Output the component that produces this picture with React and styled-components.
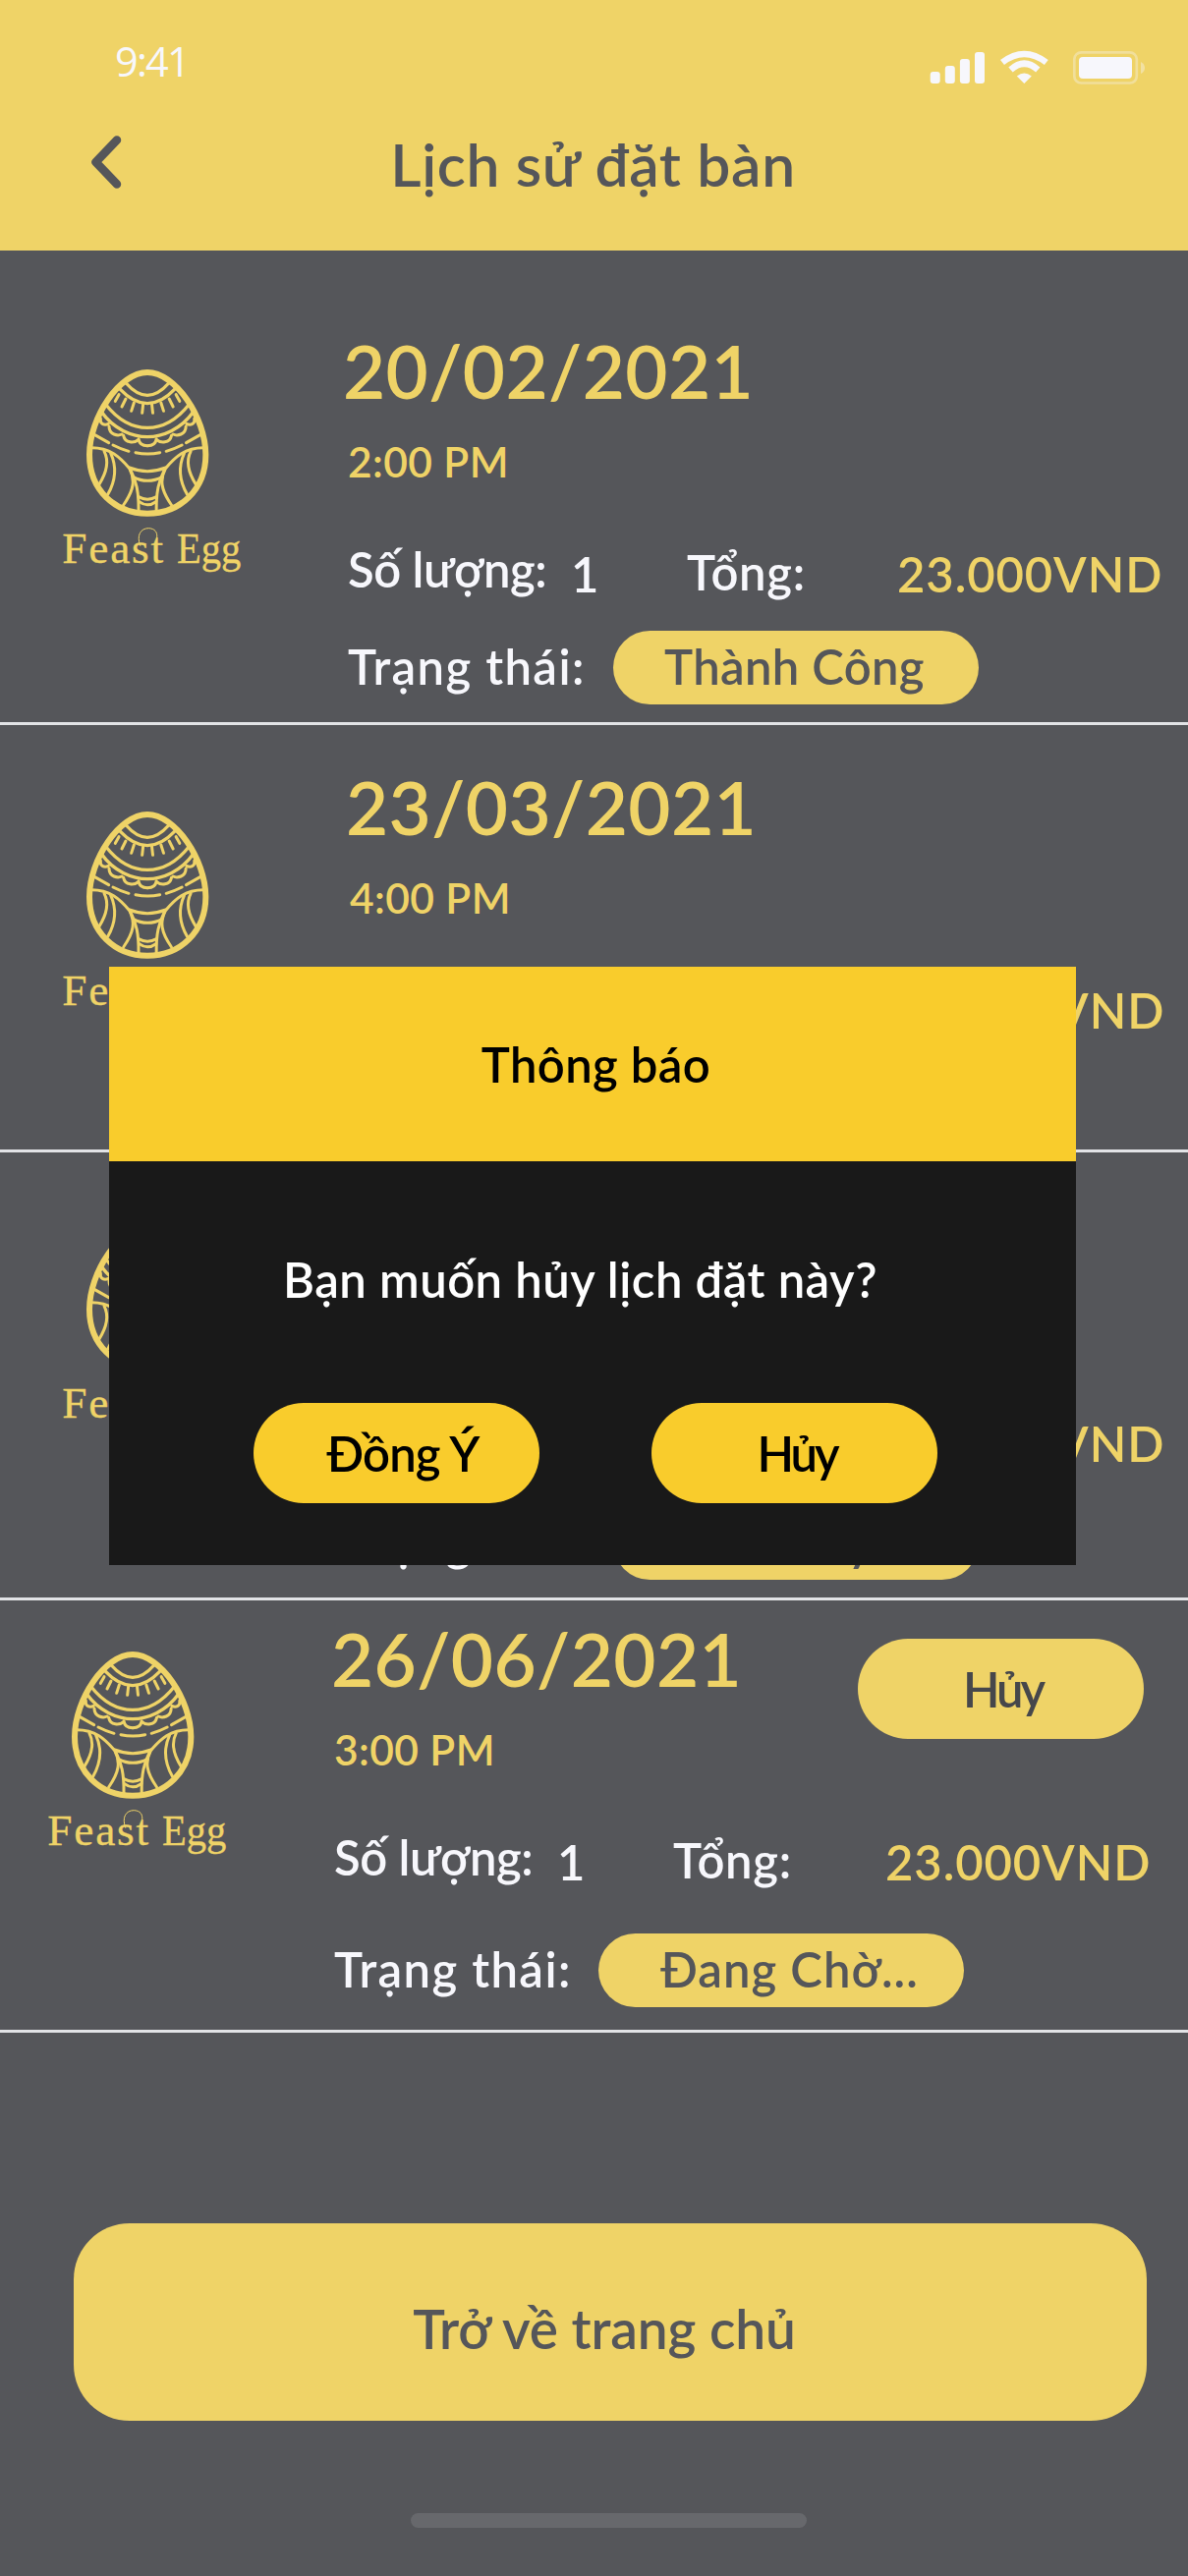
import React from "react";
import styled, { createGlobalStyle } from "styled-components";

const color = {
  page: "#55565a",
  sand: "#efd367",
  amber: "#f9cc2c",
  ink: "#191919",
  light: "#f7f7fc",
  line: "#e2e3e6",
};

const Global = createGlobalStyle`
  *, *::before, *::after { box-sizing: border-box; }
  body { margin: 0; background: ${color.page}; }
  button { border: 0; margin: 0; font: inherit; color: inherit; cursor: pointer; }
  h1, h2, p { margin: 0; font: inherit; }
`;

const Screen = styled.div`
  position: relative;
  width: 1209px;
  height: 2622px;
  overflow: hidden;
  background: ${color.page};
  color: ${color.light};
  font: 600 49px/60px Lato, "Noto Sans", sans-serif;
  white-space: nowrap;
`;

const Header = styled.header`
  height: 255px;
  background: ${color.sand};
  color: ${color.page};
`;

const StatusBar = styled.div`
  display: flex;
  align-items: flex-start;
  height: 128px;
  padding: 34px 44px 0 117px;
`;

const Clock = styled.span`
  flex: 1;
  color: ${color.light};
  font: 500 41.5px/56px "Open Sans", sans-serif;
  letter-spacing: -1.8px;
`;

const StatusIcons = styled.svg`
  display: block;
  width: 220px;
  height: 40px;
  margin-top: 15px;
`;

const TitleBar = styled.div`
  display: grid;
  grid-template-columns: 88px 41px 1fr 131px;
  align-items: start;
`;

const BackButton = styled.button`
  grid-column: 2;
  width: 41px;
  height: 64px;
  margin-top: 5px;
  padding: 0;
  background: none;
`;

const Title = styled.h1`
  padding-top: 2px;
  font-size: 60.5px;
  line-height: 74px;
  letter-spacing: 0.65px;
  text-align: center;
`;

const Row = styled.article`
  display: flex;
  align-items: flex-start;
  padding: 0 0 ${(p) => p.$bottom}px ${(p) => p.$left}px;
  border-bottom: 3px solid ${color.line};
`;

const Logo = styled.svg`
  flex: none;
  width: 230px;
  height: 250px;
  margin-top: ${(p) => p.$top}px;
  font-family: "Liberation Serif", serif;
  font-weight: 400;
`;

const Info = styled.div`
  flex: 1;
  min-width: 0;
  padding: ${(p) => p.$top}px 45px 0 ${(p) => p.$left}px;
`;

const Top = styled.div`
  display: flex;
  justify-content: space-between;
  align-items: flex-start;
  height: 164px;
`;

const DateText = styled.h2`
  padding-top: 1px;
  color: ${color.sand};
  font-size: 74.5px;
  line-height: 90px;
  letter-spacing: 0.4px;
`;

const Time = styled.p`
  margin: 22px 0 0 ${(p) => p.$inset}px;
  color: ${color.sand};
  font-size: 42.5px;
  line-height: 52px;
  letter-spacing: 0.4px;
`;

const Metrics = styled.div`
  display: grid;
  grid-template-columns: 227px 118px 213px max-content;
  height: 66px;
  margin: 53px 0 0 ${(p) => p.$inset}px;
`;

const Label = styled.span`
  padding-top: ${(p) => p.$drop || 0}px;
  letter-spacing: ${(p) => p.$track || 0}px;
`;

const Price = styled(Label)`
  padding-left: ${(p) => p.$shift || 0}px;
  color: ${color.sand};
`;

const Status = styled.div`
  display: grid;
  grid-template-columns: ${(p) => p.$label}px 372px;
  margin: ${(p) => p.$gap}px 0 0 ${(p) => p.$inset}px;
`;

const Pill = styled.span`
  display: flex;
  align-items: center;
  justify-content: center;
  height: 75px;
  padding: 0 ${(p) => (p.$nudge < 0 ? -p.$nudge : 0)}px 3px ${(p) => (p.$nudge > 0 ? p.$nudge : 0)}px;
  border-radius: 38px;
  background: ${color.sand};
  color: ${color.page};
  letter-spacing: ${(p) => p.$track || 0}px;
`;

const Action = styled.button`
  display: flex;
  align-items: center;
  justify-content: center;
  width: 291px;
  height: 102px;
  padding: 0 0 0 ${(p) => p.$nudge || 0}px;
  border-radius: 51px;
  background: ${(p) => (p.$strong ? color.amber : color.sand)};
  color: ${(p) => (p.$strong ? "#000" : "#46474b")};
  letter-spacing: ${(p) => p.$track || 0}px;
`;

const RowAction = styled(Action)`
  margin-top: 26px;
`;

const HomeButton = styled.button`
  display: flex;
  align-items: center;
  justify-content: center;
  width: 1092px;
  height: 201px;
  margin: 194px 0 0 75px;
  padding: 14px 12px 0 0;
  border-radius: 57px;
  background: ${color.sand};
  color: ${color.page};
  font-size: 55px;
  line-height: 66px;
  letter-spacing: -0.1px;
`;

const HomeIndicator = styled.div`
  width: 403px;
  height: 15px;
  margin: 94px 0 0 418px;
  border-radius: 8px;
  background: #67686c;
`;

const Dialog = styled.section`
  position: absolute;
  top: 984px;
  left: 111px;
  width: 984px;
  height: 609px;
  background: ${color.ink};
`;

const DialogTitle = styled.h2`
  height: 198px;
  padding: 69px 0 0 7px;
  background: ${color.amber};
  color: #000;
  letter-spacing: 0.4px;
  text-align: center;
`;

const Question = styled.p`
  padding: 90px 25px 0 0;
  color: #fff;
  letter-spacing: 0.5px;
  text-align: center;
`;

const Choices = styled.div`
  display: flex;
  gap: 114px;
  padding: 96px 0 0 147px;
`;

const half = (
  <>
    <path d="M243 155L232 175M264 168L252 192M289 180L281 205M317 184L314 211" />
    <path d="M303 290C305 304 315 311 330 311M303 292C290 304 262 304 257 280M252 276C240 282 213 278 213 252M211 244C200 250 184 246 187 228" />
    <path d="M168 277L212 302M225 309Q248 321 273 328" />
    <path d="M160 317C215 317 245 345 275 380C293 415 290 445 257 492" />
    <path d="M278 384C296 420 304 450 303 510" />
    <path d="M198 328Q220 370 182 430M218 334Q246 395 209 460" />
  </>
);

function FeastEggLogo({ top }) {
  return (
    <Logo $top={top} viewBox="0 0 690 750" fill="none" stroke={color.sand} strokeWidth="9" strokeLinecap="round">
      <path
        d="M330 87C415 87 508 225 508 338C508 445 430 518 330 518C230 518 153 445 153 338C153 225 245 87 330 87Z"
        strokeWidth="18"
      />
      <path d="M265 120Q330 194 395 120M245 137Q330 227 415 137" strokeWidth="10" />
      <path d="M203 185C245 238 288 256 330 256S415 238 457 185M190 208C228 262 285 284 330 284S432 262 470 208" strokeWidth="10" />
      {half}
      <g transform="translate(660.5 0) scale(-1 1)">{half}</g>
      <path d="M294 332Q331 340 368 332M275 378Q330 400 386 378M286 406Q330 430 376 406M303 467Q330 482 358 467M305 482Q330 501 356 482" />
      <path d="M308 616C296 585 309 563 334 563C353 564 361 575 359 592L357 620" strokeWidth="3" />
      <text x="70" y="668" fontSize="136" textLength="308" fill={color.sand} strokeWidth="1">
        Feast
      </text>
      <text x="420" y="668" fontSize="136" textLength="196" lengthAdjust="spacingAndGlyphs" fill={color.sand} strokeWidth="1">
        Egg
      </text>
    </Logo>
  );
}

const bookings = [
  { date: "20/02/2021", time: "2:00 PM", status: "Thành Công", left: 40, logoTop: 95, infoLeft: 79, inset: 5, top: 76, gap: 28, bottom: 18, label: 270, nudge: -3, track: 0.35, shift: 1 },
  { date: "23/03/2021", time: "4:00 PM", status: "Thành Công", left: 40, logoTop: 62, infoLeft: 82, inset: 4, top: 37, gap: 28, bottom: 9, label: 270, nudge: -3, track: 0.35, shift: 1 },
  { date: "25/05/2021", time: "3:00 PM", status: "Đã Hủy", left: 40, logoTop: 47, infoLeft: 79, inset: 5, top: 43, gap: 34, bottom: 18, label: 270, nudge: 0, track: -2, shift: 3 },
  { date: "26/06/2021", time: "3:00 PM", status: "Đang Chờ...", left: 25, logoTop: 26, infoLeft: 82, inset: 3, top: 13, gap: 43, bottom: 22.5, label: 269, nudge: 17, track: 1, shift: 3, cancellable: true },
];

function Booking({ b }) {
  return (
    <Row $left={b.left} $bottom={b.bottom}>
      <FeastEggLogo top={b.logoTop} />
      <Info $top={b.top} $left={b.infoLeft}>
        <Top>
          <div>
            <DateText>{b.date}</DateText>
            <Time $inset={b.inset}>{b.time}</Time>
          </div>
          {b.cancellable && <RowAction $nudge={4} $track={-3}>Hủy</RowAction>}
        </Top>
        <Metrics $inset={b.inset}>
          <Label $drop={1} $track={-0.4}>Số lượng:</Label>
          <Label $drop={6}>1</Label>
          <Label $drop={4} $track={0.7}>Tổng:</Label>
          <Price $drop={6} $track={0.9} $shift={b.shift}>23.000VND</Price>
        </Metrics>
        <Status $gap={b.gap} $label={b.label} $inset={b.inset}>
          <Label $drop={6} $track={1.4}>Trạng thái:</Label>
          <Pill $nudge={b.nudge} $track={b.track}>{b.status}</Pill>
        </Status>
      </Info>
    </Row>
  );
}

export default function App() {
  return (
    <>
      <Global />
      <Screen>
        <Header>
          <StatusBar>
            <Clock>9:41</Clock>
            <StatusIcons viewBox="945 49 220 40" fill={color.light}>
              <rect x="946.7" y="73" width="10" height="12" rx="3" />
              <rect x="961.8" y="67" width="10" height="18" rx="3" />
              <rect x="976.9" y="60" width="10" height="25" rx="3" />
              <rect x="992" y="53" width="10" height="32" rx="3" />
              <path d="M1042.300 85L1034.800 77.500Q1042.300 71.500 1049.800 77.500Z" />
              <path d="M1028.500 71Q1042.300 58.500 1056.300 71" fill="none" stroke={color.light} strokeWidth="6.500" />
              <path d="M1020 63.500Q1042.300 46.500 1064.800 63.500" fill="none" stroke={color.light} strokeWidth="6.500" />
              <rect x="1093.300" y="53.300" width="63.500" height="31.200" rx="7" fill="none" stroke={color.light} strokeWidth="2.700" opacity="0.35" />
              <rect x="1098" y="58" width="54" height="22" rx="4" />
              <path d="M1161 63Q1165 65 1165 69T1161 75Z" opacity="0.4" />
            </StatusIcons>
          </StatusBar>
          <TitleBar>
            <BackButton aria-label="Back">
              <svg width="41" height="64" viewBox="0 0 41 64" fill="none" stroke={color.page} strokeWidth="8.500" strokeLinecap="round" strokeLinejoin="round">
                <path d="M31 9.500L9.500 32L31 54.500" />
              </svg>
            </BackButton>
            <Title>Lịch sử đặt bàn</Title>
          </TitleBar>
        </Header>

        <main>
          {bookings.map((b) => (
            <Booking key={b.date} b={b} />
          ))}
        </main>

        <HomeButton>Trở về trang chủ</HomeButton>
        <HomeIndicator />

        <Dialog role="dialog">
          <DialogTitle>Thông báo</DialogTitle>
          <Question>Bạn muốn hủy lịch đặt này?</Question>
          <Choices>
            <Action $strong $nudge={13} $track={-0.8}>Đồng Ý</Action>
            <Action $strong $nudge={5} $track={-3}>Hủy</Action>
          </Choices>
        </Dialog>
      </Screen>
    </>
  );
}
